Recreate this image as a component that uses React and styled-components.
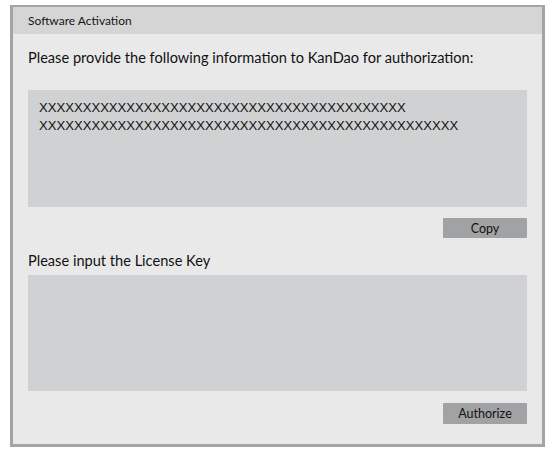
import React from 'react';
import styled, { createGlobalStyle } from 'styled-components';

const GlobalStyle = createGlobalStyle`
  html, body {
    margin: 0;
    padding: 0;
    background: #ffffff;
  }
  body {
    font-family: "Lato", "Noto Sans", sans-serif;
    color: #111;
  }
`;

const Page = styled.div`
  padding: 5px 0 0 10px;
`;

const Dialog = styled.div`
  width: 529px;
  height: 437px;
  border: 3px solid #a4a4a4;
  border-top-width: 2px;
  background: #e9e9e9;
  display: flex;
  flex-direction: column;
`;

const TitleBar = styled.div`
  height: 27px;
  background: #d5d5d5;
  display: flex;
  align-items: center;
  padding-left: 15px;
  font-size: 12px;
  color: #151515;
`;

const Body = styled.div`
  flex: 1;
  padding: 0 15px;
  display: flex;
  flex-direction: column;
`;

const Label = styled.div`
  font-size: 14.6px;
  line-height: 20px;
  margin-top: ${p => p.$top}px;
  margin-bottom: ${p => p.$bottom}px;
  white-space: nowrap;
`;

const TextBox = styled.div`
  height: ${p => p.$height}px;
  background: #d0d1d3;
  padding: 9px 11px;
  box-sizing: border-box;
  font-family: "Liberation Sans", Arial, sans-serif;
  font-size: 13.1px;
  line-height: 18px;
  color: #111;
`;

const Line = styled.div`
  white-space: nowrap;
`;

const ButtonRow = styled.div`
  display: flex;
  justify-content: flex-end;
  margin-top: ${p => p.$top}px;
`;

const Button = styled.button`
  width: 84px;
  height: ${p => p.$height || 20}px;
  border: none;
  border-radius: 1px;
  background: #a1a2a4;
  font-family: "Lato", "Noto Sans", sans-serif;
  font-size: 12.5px;
  color: #111;
  padding: 0;
`;

const ids = ['X'.repeat(42), 'X'.repeat(48)];

export default function App() {
  return (
    <Page>
      <GlobalStyle />
      <Dialog>
        <TitleBar>Software Activation</TitleBar>
        <Body>
          <Label $top={14} $bottom={22}>
            Please provide the following information to KanDao for authorization:
          </Label>
          <TextBox $height={117}>
            {ids.map((l, i) => <Line key={i}>{l}</Line>)}
          </TextBox>
          <ButtonRow $top={11}>
            <Button>Copy</Button>
          </ButtonRow>
          <Label $top={13} $bottom={4}>Please input the License Key</Label>
          <TextBox $height={116} />
          <ButtonRow $top={12}>
            <Button $height={21}>Authorize</Button>
          </ButtonRow>
        </Body>
      </Dialog>
    </Page>
  );
}
